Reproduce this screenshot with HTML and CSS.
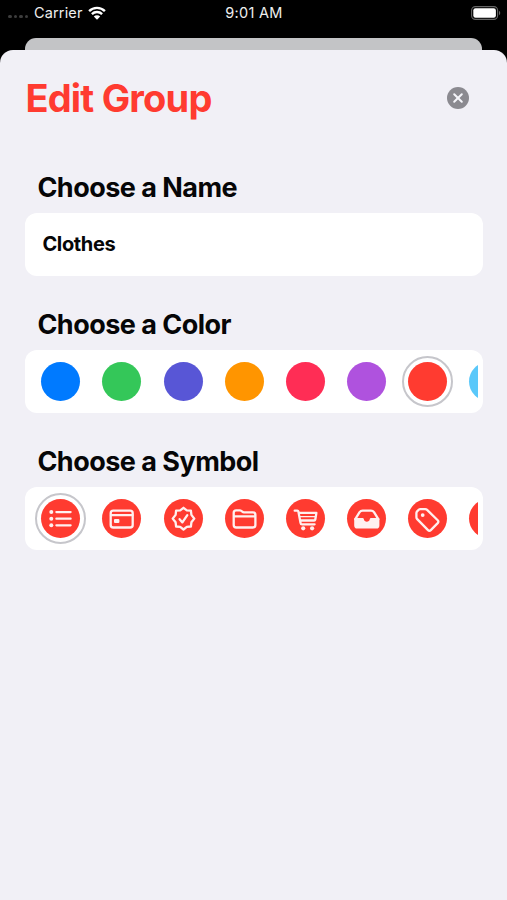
FILE: index.html
```html
<!DOCTYPE html>
<html lang="en">
<head>
  <meta charset="UTF-8" />
  <meta name="viewport" content="width=device-width, initial-scale=1.0"/>
  <title>Edit Group</title>
  <link rel="stylesheet" href="styles.css">
</head>
<body>

<div class="status-bar">
  <div class="carrier">
    <span class="signal"><i></i><i></i><i></i><i></i></span>
    <span class="carrier-name">Carrier</span>
    <svg class="wifi" viewBox="0 0 18 14">
      <path d="M1.1 5.1a11.2 11.2 0 0 1 15.8 0M3.9 8.1a7.2 7.2 0 0 1 10.2 0" fill="none" stroke="#fff" stroke-width="2.4"/>
      <path d="M9 13.8L5.8 10.6a4.5 4.5 0 0 1 6.4 0z" fill="#fff"/>
    </svg>
  </div>
  <span class="time">9:01 AM</span>
  <svg class="battery" viewBox="0 0 30 14">
    <rect x=".6" y=".6" width="26" height="12.8" rx="3.8" fill="none" stroke="#666" stroke-width="1.1"/>
    <rect x="2.3" y="2.3" width="22.6" height="9.4" rx="2.2" fill="#fff"/>
    <path d="M28 4.8c1.7.8 1.7 3.6 0 4.4z" fill="#666"/>
  </svg>
</div>

<div class="back-sheet"></div>

<main class="sheet">
  <header>
    <h1>Edit Group</h1>
    <button class="close" aria-label="Close">
      <svg viewBox="0 0 22 22"><path d="M7.2 7.2l7.6 7.6M14.8 7.2l-7.6 7.6"/></svg>
    </button>
  </header>

  <section>
    <h2>Choose a Name</h2>
    <div class="card name">Clothes</div>
  </section>

  <section>
    <h2>Choose a Color</h2>
    <div class="card">
      <div class="scroller">
        <span class="dot blue"></span>
        <span class="dot green"></span>
        <span class="dot indigo"></span>
        <span class="dot orange"></span>
        <span class="dot pink"></span>
        <span class="dot purple"></span>
        <span class="dot red selected"></span>
        <span class="dot teal"></span>
      </div>
    </div>
  </section>

  <section>
    <h2>Choose a Symbol</h2>
    <div class="card">
      <div class="scroller">
        <span class="dot red selected">
          <svg viewBox="0 0 39 39">
            <path d="M15.4 13.1h14.2M15.4 19.7h14.2M15.4 26.3h14.2"/>
            <g class="solid"><circle cx="10.3" cy="13.1" r="2"/><circle cx="10.3" cy="19.7" r="2"/><circle cx="10.3" cy="26.3" r="2"/></g>
          </svg>
        </span>
        <span class="dot red">
          <svg viewBox="0 0 39 39">
            <rect x="8.7" y="11.7" width="22" height="16.8" rx="2.6"/>
            <path d="M9 16.2h21.4"/>
            <rect class="solid" x="12" y="19.9" width="5.4" height="4" rx="1"/>
          </svg>
        </span>
        <span class="dot red">
          <svg viewBox="0 0 39 39">
            <path d="M19.5 8.8l3.3 2.6 4.1.3.5 4.2 2.9 3.7-2.9 3.7-.5 4.2-4.1.3-3.3 2.7-3.3-2.7-4.1-.3-.5-4.2-2.9-3.7 2.9-3.7.5-4.2 4.1-.3z"/>
            <path d="M15.6 20.2l2.8 3.2 4.9-7.3"/>
          </svg>
        </span>
        <span class="dot red">
          <svg viewBox="0 0 39 39">
            <path d="M8.7 26V13.8q0-2.5 2.5-2.5h3.5q1 0 1.8.7l.8.7q.7.6 1.7.6h8.8q2.6 0 2.6 2.6V26q0 2.5-2.6 2.5H11.3q-2.6 0-2.6-2.5zM9 17.4h21.2"/>
          </svg>
        </span>
        <span class="dot red">
          <svg viewBox="0 0 39 39">
            <path d="M8.7 11.7h2.6q.9 0 1.1.9l2.1 11.2q.2 1.5 1.6 1.5h12.5M12.9 13.9h17.5l-1.1 6.6q-.2 1-1.2 1H14.4"/>
            <path class="thin" d="M14 17.7h15"/>
            <g class="solid"><circle cx="17.2" cy="29.3" r="2.1"/><circle cx="26.1" cy="29.3" r="2.1"/></g>
          </svg>
        </span>
        <span class="dot red">
          <svg viewBox="0 0 39 39">
            <path d="M8.3 20.2l4.3-7.1q1.1-1.5 3-1.5h8.4q1.9 0 3 1.5l4.3 7.1"/>
            <path class="solid" d="M7.2 20q0-1 1-1h7.4q1 0 1.2 1c.4 3.6 5.7 3.6 6 0q.2-1 1.2-1h7.4q1 0 1 1v6.5q0 3.1-3 3.1H10.2q-3 0-3-3.1z"/>
          </svg>
        </span>
        <span class="dot red">
          <svg viewBox="0 0 39 39">
            <path d="M8.4 18.2v-4.1q0-1 .7-1.7l1.6-1.6q.7-.7 1.7-.7h4.8q1.1 0 1.9.8l10.6 10.4q1.3 1.4 0 2.8l-6.9 7q-1.4 1.4-2.8 0L9.2 20.1q-.8-.8-.8-1.9z"/>
            <circle class="solid" cx="14.7" cy="16.1" r="1.9"/>
          </svg>
        </span>
        <span class="dot red"></span>
      </div>
    </div>
  </section>
</main>

</body>
</html>
```
FILE: styles.css
```css
* { box-sizing: border-box; }
body {
  margin: 0;
  height: 900px;
  display: flex;
  flex-direction: column;
  overflow: hidden;
  background: #000;
  color: #060607;
  font-family: Inter, "Liberation Sans", sans-serif;
}
h1, h2 { margin: 0; }

.status-bar {
  height: 38px;
  padding: 5px 6px 0 8px;
  display: grid;
  grid-template-columns: 1fr auto 1fr;
  align-items: start;
  color: #eee;
  font-size: 14.5px;
  line-height: 16px;
}
.carrier {
  display: flex;
  align-items: center;
}
.carrier-name { letter-spacing: 0.15px; }
.time {
  padding-right: 1px;
  letter-spacing: 0.3px;
}
.signal {
  display: flex;
  gap: 2px;
  width: 26px;
  padding-top: 7px;
}
.signal i {
  width: 3.6px;
  height: 3.6px;
  border-radius: 50%;
  background: #3d3d3d;
}
.wifi {
  width: 18px;
  height: 14px;
  margin-left: 5px;
}
.battery {
  width: 30px;
  height: 14px;
  margin-top: 1px;
  justify-self: end;
}

.back-sheet {
  height: 12px;
  margin: 0 25px;
  background: #c3c4c6;
  border-radius: 11px 11px 0 0;
}

.sheet {
  flex: 1;
  padding: 0 24.5px 0 25.4px;
  background: #f1f0f6;
  border-radius: 13px 13px 0 0;
}
header {
  height: 95px;
  margin-bottom: 1px;
  padding-right: 14px;
  display: flex;
  justify-content: space-between;
  align-items: center;
}
h1 {
  color: #ff3b30;
  font-size: 38px;
  font-weight: 700;
  line-height: 46px;
  letter-spacing: -0.8px;
}
.close {
  width: 22px;
  height: 22px;
  padding: 0;
  border: none;
  border-radius: 50%;
  background: #8b8a90;
}
.close svg {
  display: block;
  fill: none;
  stroke: #f5f5fa;
  stroke-width: 2;
  stroke-linecap: round;
}

section { height: 137px; }
h2 {
  height: 67px;
  padding: 25px 0 0 12px;
  font-size: 27px;
  font-weight: 700;
  line-height: 34px;
  letter-spacing: -0.52px;
  white-space: nowrap;
}
.card {
  height: 63px;
  padding: 0 5px 0 10px;
  background: #fff;
  border-radius: 12px;
}
.name {
  padding-left: 17px;
  font-size: 20px;
  font-weight: 700;
  line-height: 62px;
  letter-spacing: -0.35px;
}

.scroller {
  height: 63px;
  padding-left: 6px;
  display: flex;
  align-items: center;
  gap: 22.1px;
  overflow: hidden;
}
.dot {
  flex: none;
  width: 39px;
  height: 39px;
  border-radius: 50%;
}
.selected {
  outline: 2px solid #c6c6cb;
  outline-offset: 4px;
}
.blue { background: #007aff; }
.green { background: #34c759; }
.indigo { background: #5856d6; }
.orange { background: #ff9500; }
.pink { background: #ff2d55; }
.purple { background: #af52de; }
.red { background: #ff3b30; }
.teal { background: #5ac8fa; }

.dot svg {
  display: block;
  fill: none;
  stroke: #fff0ef;
  stroke-width: 2.3;
  stroke-linecap: round;
  stroke-linejoin: round;
}
.dot svg .solid {
  fill: #fff0ef;
  stroke: none;
}
.dot svg .thin { stroke-width: 1.2; }
```
